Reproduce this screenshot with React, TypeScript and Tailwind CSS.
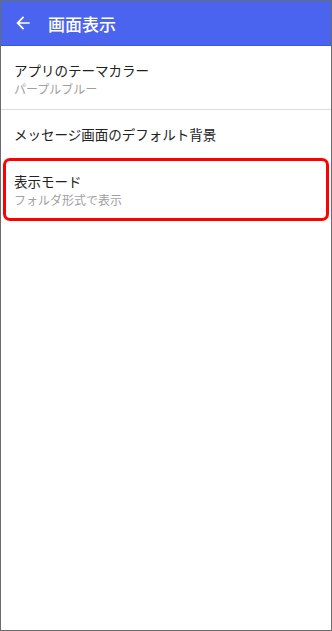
const font = { fontFamily: '"Noto Sans CJK JP", "Noto Sans", sans-serif' };

function BackArrow() {
  return (
    <svg width="20" height="20" viewBox="0 0 24 24" className="ml-[12px] shrink-0" fill="white">
      <path d="M20 11H7.83l5.59-5.59L12 4l-8 8 8 8 1.41-1.41L7.83 13H20v-2z" />
    </svg>
  );
}

export default function App() {
  return (
    <div
      className="w-[332px] h-[631px] border border-[#6b6b6b] bg-white flex flex-col overflow-hidden"
      style={font}
    >
      <div className="h-[45px] bg-[#4b64f0] border-b border-[#3a55e6] flex items-center shrink-0">
        <BackArrow />
        <span className="ml-[15px] text-white text-[17px] font-medium leading-none">画面表示</span>
      </div>

      <div className="px-[13px] pt-[14px] pb-[12px] border-b border-[#dddddd]">
        <p className="text-[13.5px] leading-[20px] text-[#212121]">アプリのテーマカラー</p>
        <p className="text-[12px] leading-[17px] text-[#a0a0a0]">パープルブルー</p>
      </div>

      <div className="px-[13px] py-[14px]">
        <p className="text-[13.5px] leading-[20px] text-[#212121]">メッセージ画面のデフォルト背景</p>
      </div>

      <div className="mx-[2px] border-[3px] border-[#ff0000] rounded-[7px] px-[8px] pt-[10px] pb-[10px]">
        <p className="text-[13.5px] leading-[20px] text-[#212121]">表示モード</p>
        <p className="text-[12px] leading-[17px] text-[#a0a0a0]">フォルダ形式で表示</p>
      </div>
    </div>
  );
}
